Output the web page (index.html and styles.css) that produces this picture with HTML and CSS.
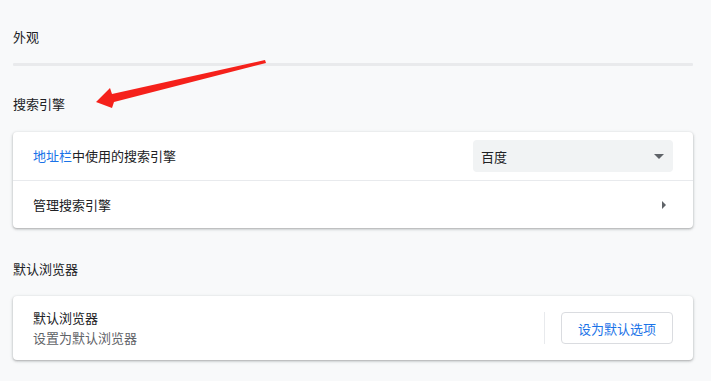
FILE: index.html
```html
<!DOCTYPE html>
<html lang="zh-CN">
<head>
<meta charset="utf-8">
<link rel="stylesheet" href="styles.css">
</head>
<body>
<div class="page">
  <div class="title first">外观</div>
  <div class="divider"></div>
  <div class="title search">搜索引擎</div>
  <div class="card">
    <div class="row">
      <span class="label"><span class="link">地址栏</span>中使用的搜索引擎</span>
      <div class="select"><span>百度</span><span class="caret"></span></div>
    </div>
    <div class="row sep">
      <span class="label">管理搜索引擎</span>
      <span class="chev"></span>
    </div>
  </div>
  <div class="title browser">默认浏览器</div>
  <div class="card">
    <div class="row tall">
      <div class="texts">
        <div class="primary">默认浏览器</div>
        <div class="secondary">设置为默认浏览器</div>
      </div>
      <div class="vsep"></div>
      <button class="btn">设为默认选项</button>
    </div>
  </div>
  <svg class="arrow" width="711" height="381" viewBox="0 0 711 381">
    <polygon points="96,102 110,88 112,94 265,60 266,63 114,102 112,108" fill="#f5211b"/>
  </svg>
</div>
</body>
</html>
```
FILE: styles.css
```css
html, body { margin: 0; padding: 0; }
body {
  background: #f8f9fa;
  font-family: "Noto Sans CJK SC", "Microsoft YaHei", sans-serif;
  font-size: 13px;
  color: #202124;
  width: 711px;
  height: 381px;
  overflow: hidden;
}
.page {
  padding: 0 18px 0 13px;
}
.title {
  line-height: 20px;
  height: 20px;
}
.first { padding-top: 27px; }
.divider {
  margin-top: 16px;
  height: 3px;
  background: #e9eaec;
  border-radius: 1px;
}
.search { margin-top: 28px; }
.browser { margin-top: 31px; }
.card {
  background: #fff;
  border-radius: 4px;
  box-shadow: 0 1px 2px rgba(60,64,67,.3), 0 1px 3px 1px rgba(60,64,67,.12);
  margin-top: 18px;
}
.browser + .card { margin-top: 17px; }
.row {
  display: flex;
  align-items: center;
  height: 48px;
  padding: 0 20px;
  box-sizing: border-box;
}
.row.sep { border-top: 1px solid #e8eaed; height: 48px; }
.label { flex: 1; line-height: 20px; }
.link { color: #1a73e8; }
.select {
  width: 200px;
  height: 32px;
  box-sizing: border-box;
  background: #f1f3f4;
  border-radius: 4px;
  display: flex;
  align-items: center;
  justify-content: space-between;
  padding: 0 9px 0 8px;
}
.caret {
  width: 0; height: 0;
  border-left: 5px solid transparent;
  border-right: 5px solid transparent;
  border-top: 5px solid #5f6368;
}
.chev {
  width: 0; height: 0;
  border-top: 4px solid transparent;
  border-bottom: 4px solid transparent;
  border-left: 4px solid #5f6368;
  margin-right: 7px;
}
.row.tall {
  height: 64px;
}
.texts { flex: 1; line-height: 20px; }
.secondary { color: #5f6368; }
.vsep {
  width: 1px;
  height: 32px;
  background: #e8eaed;
  margin-right: 16px;
}
.btn {
  width: 112px;
  height: 32px;
  box-sizing: border-box;
  border: 1px solid #dadce0;
  border-radius: 4px;
  background: #fff;
  color: #1a73e8;
  font-family: inherit;
  font-size: 13px;
  padding: 0;
}
.arrow {
  position: absolute;
  left: 0;
  top: 0;
  pointer-events: none;
}
```
